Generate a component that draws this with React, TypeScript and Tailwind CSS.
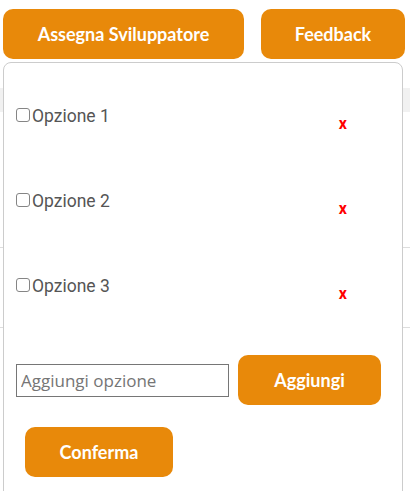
import React, { useState } from 'react';

const btn =
  "bg-[#e8890a] text-white font-['Lato',sans-serif] font-bold text-[18px] rounded-[10px] h-[50px] flex items-center justify-center";

const App: React.FC = () => {
  const [options, setOptions] = useState(['Opzione 1', 'Opzione 2', 'Opzione 3']);
  const [value, setValue] = useState('');

  const addOption = () => {
    if (!value.trim()) return;
    setOptions([...options, value.trim()]);
    setValue('');
  };

  return (
    <div className="relative w-[410px] h-[491px] overflow-hidden bg-white font-['Lato',sans-serif]">
      {/* Top actions */}
      <div className="flex gap-[17px] pl-[3px] pt-[9px]">
        <button className={`${btn} w-[241px]`}>Assegna Sviluppatore</button>
        <button className={`${btn} w-[144px]`}>Feedback</button>
      </div>

      {/* Table behind the dropdown */}
      <div className="mt-[29px]">
        <div className="h-[24px] bg-[#f1f1f1]" />
        <div className="h-[136px] border-b border-[#dddddd]" />
        <div className="h-[80px] border-b border-[#dddddd]" />
      </div>

      {/* Dropdown panel */}
      <div className="absolute left-[3px] top-[62px] w-[400px] h-[460px] bg-white border border-[#cccccc] rounded-t-[8px] pl-[12px] pt-[12px] font-['Roboto',sans-serif]">
        {options.map((opt, i) => (
          <div key={i} className="flex items-center justify-between h-[85px] pr-[55px]">
            <label className="flex items-center gap-[2px] text-[17.5px] text-[#555555] pb-[2px]">
              <input
                type="checkbox"
                className="appearance-none w-[14px] h-[14px] border border-[#858585] rounded-[3px] bg-white -mt-[4px]"
              />
              {opt}
            </label>
            <button
              className="text-[#ff0000] text-[16px] font-bold font-['Roboto',sans-serif] mt-[12px]"
              onClick={() => setOptions(options.filter((_, j) => j !== i))}
            >
              x
            </button>
          </div>
        ))}

        <div className="flex items-center gap-[9px] mt-[25px]">
          <input
            value={value}
            onChange={e => setValue(e.target.value)}
            placeholder="Aggiungi opzione"
            className="w-[213px] h-[33px] border border-[#767676] px-[4px] text-[17px] font-['Open_Sans',sans-serif] placeholder:text-[#757575]"
          />
          <button onClick={addOption} className={`${btn} w-[143px]`}>
            Aggiungi
          </button>
        </div>

        <button className={`${btn} w-[148px] ml-[9px] mt-[22px]`}>Conferma</button>
      </div>
    </div>
  );
};

export default App;
